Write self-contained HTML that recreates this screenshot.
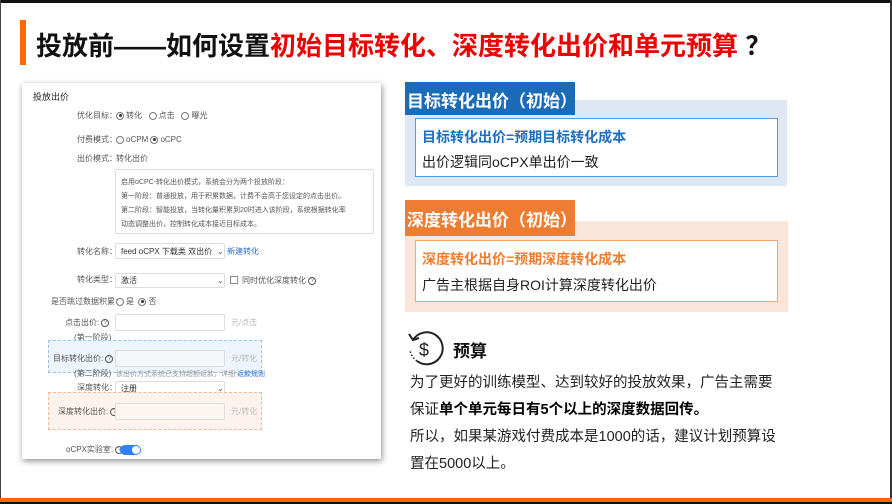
<!DOCTYPE html>
<html><head><meta charset="utf-8"><style>
*{margin:0;padding:0;box-sizing:border-box}
body{width:892px;height:504px;overflow:hidden;background:#fff;font-family:"Liberation Sans","Noto Sans CJK SC",sans-serif;position:relative}
.a{position:absolute;white-space:nowrap}
.s{font-size:8px;line-height:10px;color:#555}
.in{position:absolute;border:1px solid #ddd;background:#fff;border-radius:2px}
.r{display:inline-block;width:8px;height:8px;border:1px solid #777;border-radius:50%;vertical-align:middle;margin-right:2px;position:relative}
.r.on::after{content:"";position:absolute;left:1.5px;top:1.5px;width:3px;height:3px;border-radius:50%;background:#333}
.q{display:inline-block;width:8px;height:8px;border:1px solid #555;border-radius:50%;font-size:6px;line-height:6px;text-align:center;vertical-align:middle;overflow:hidden}
</style></head><body>
<div class="a" style="left:0;top:0;width:892px;height:3px;background:#111"></div>
<div class="a" style="left:0;top:0;width:1px;height:504px;background:#444"></div>
<div class="a" style="left:890px;top:0;width:2px;height:504px;background:#333"></div>
<div class="a" style="left:0;top:498px;width:892px;height:4px;background:#ff6600"></div>
<div class="a" style="left:0;top:502px;width:892px;height:2px;background:#111"></div>

<div class="a" style="left:20px;top:20px;width:6px;height:45px;background:#ff6a00"></div>
<div class="a" style="left:36px;top:26px;font-size:26px;font-weight:bold;color:#111;letter-spacing:0px">投放前——如何设置<span style="color:#ee0000">初始目标转化、深度转化出价和单元预算</span> ？</div>

<!-- screenshot panel -->
<div class="a" style="left:22px;top:83px;width:359px;height:376px;background:#fff;box-shadow:1px 2px 6px rgba(0,0,0,.45)"></div>
<div class="a" style="left:33px;top:90px;font-size:9px;color:#222">投放出价</div>
<div class="a s" style="left:77px;top:111px">优化目标：</div>
<div class="a s" style="left:116px;top:111px"><span class="r on"></span>转化 &nbsp;&nbsp;<span class="r"></span>点击 &nbsp;&nbsp;<span class="r"></span>曝光</div>
<div class="a s" style="left:77px;top:135px">付费模式：</div>
<div class="a s" style="left:116px;top:135px"><span class="r"></span>oCPM <span class="r on"></span>oCPC</div>
<div class="a s" style="left:77px;top:154px">出价模式：</div>
<div class="a s" style="left:116px;top:154px">转化出价</div>
<div class="in" style="left:115px;top:169px;width:259px;height:65px"></div>
<div class="a" style="left:121px;top:176px;font-size:7px;line-height:14px;color:#555">启用oCPC-转化出价模式，系统会分为两个投放阶段：<br>第一阶段：普通投放，用于积累数据，计费不会高于您设定的点击出价。<br>第二阶段：智能投放，当转化量积累到20时进入该阶段，系统根据转化率<br>动态调整出价，控制转化成本接近目标成本。</div>
<div class="a s" style="left:77px;top:247px">转化名称：</div>
<div class="in" style="left:115px;top:243px;width:110px;height:16px"></div>
<div class="a s" style="left:121px;top:247px;color:#333">feed oCPX 下载类 双出价</div>
<div class="a s" style="left:217px;top:247px">⌄</div>
<div class="a s" style="left:227px;top:247px;color:#2a6fd6">新建转化</div>
<div class="a s" style="left:77px;top:275px">转化类型：</div>
<div class="in" style="left:115px;top:273px;width:110px;height:15px"></div>
<div class="a s" style="left:121px;top:276px;color:#333">激活</div>
<div class="a s" style="left:217px;top:276px">⌄</div>
<div class="a" style="left:230px;top:276px;width:8px;height:8px;border:1px solid #888"></div>
<div class="a s" style="left:242px;top:276px">同时优化深度转化 <span class="q">?</span></div>
<div class="a s" style="left:51px;top:297px">是否跳过数据积累：</div>
<div class="a s" style="left:116px;top:297px"><span class="r"></span>是 &nbsp;<span class="r on"></span>否</div>
<div class="a s" style="left:65px;top:318px">点击出价: <span class="q">?</span></div>
<div class="in" style="left:115px;top:314px;width:110px;height:17px"></div>
<div class="a s" style="left:231px;top:318px;color:#bbb">元/点击</div>
<div class="a s" style="left:74px;top:333px">(第一阶段)</div>
<div class="a" style="left:48px;top:340px;width:214px;height:33px;background:#eef4fb;border:1px dashed #9cc3ec"></div>
<div class="a s" style="left:53px;top:354px">目标转化出价: <span class="q">?</span></div>
<div class="in" style="left:115px;top:350px;width:110px;height:17px;background:#f5f7fa"></div>
<div class="a s" style="left:231px;top:354px;color:#bbb">元/转化</div>
<div class="a s" style="left:74px;top:369px">(第二阶段)</div>
<div class="a" style="left:116px;top:369px;font-size:7px;color:#999">该出价方式系统已支持超额返款，详细 <span style="color:#2a6fd6">返款规则</span></div>
<div class="a s" style="left:77px;top:383px">深度转化：</div>
<div class="in" style="left:115px;top:381px;width:110px;height:15px"></div>
<div class="a s" style="left:121px;top:384px;color:#333">注册</div>
<div class="a s" style="left:217px;top:384px">⌄</div>
<div class="a" style="left:48px;top:392px;width:214px;height:38px;background:#fdf3ee;border:1px dashed #f5b99a"></div>
<div class="a s" style="left:58px;top:407px">深度转化出价: <span class="q">?</span></div>
<div class="in" style="left:115px;top:403px;width:110px;height:17px;background:#fdf5f1"></div>
<div class="a s" style="left:231px;top:407px;color:#bbb">元/转化</div>
<div class="a s" style="left:66px;top:445px">oCPX实验室: <span class="q">?</span></div>
<div class="a" style="left:120px;top:445px;width:21px;height:10px;border-radius:5px;background:#2d83f0"></div>
<div class="a" style="left:132px;top:446px;width:8px;height:8px;border-radius:50%;background:#fff"></div>

<!-- right blue block -->
<div class="a" style="left:405px;top:100px;width:382px;height:86px;background:#dde8f4"></div>
<div class="a" style="left:405px;top:82px;width:170px;height:33px;background:#1a6bb8"></div>
<div class="a" style="left:407px;top:87px;font-size:17px;font-weight:bold;color:#fff">目标转化出价（初始）</div>
<div class="a" style="left:415px;top:118px;width:363px;height:59px;background:#fff;border:1px solid #5b9bd5"></div>
<div class="a" style="left:422px;top:127px;font-size:14px;font-weight:bold;color:#1f6fc0">目标转化出价=预期目标转化成本</div>
<div class="a" style="left:422px;top:152px;font-size:14px;color:#222">出价逻辑同oCPX单出价一致</div>

<!-- right orange block -->
<div class="a" style="left:405px;top:221px;width:383px;height:91px;background:#fbe5d8"></div>
<div class="a" style="left:405px;top:200px;width:170px;height:36px;background:#ee7d31"></div>
<div class="a" style="left:407px;top:206px;font-size:17px;font-weight:bold;color:#fff">深度转化出价（初始）</div>
<div class="a" style="left:415px;top:240px;width:363px;height:62px;background:#fff;border:1px solid #f4a66e"></div>
<div class="a" style="left:422px;top:249px;font-size:14px;font-weight:bold;color:#ee7d31">深度转化出价=预期深度转化成本</div>
<div class="a" style="left:422px;top:275px;font-size:14px;color:#222">广告主根据自身ROI计算深度转化出价</div>

<!-- budget -->
<svg class="a" style="left:405px;top:328px" width="42" height="42" viewBox="0 0 42 42">
<path d="M8 12 A16 16 0 1 1 12 33" fill="none" stroke="#222" stroke-width="2"/>
<path d="M12 33 A16 16 0 0 1 5 22" fill="none" stroke="#222" stroke-width="1.5" stroke-dasharray="1.5 2"/>
<path d="M4 6 L8 12 L14 10" fill="none" stroke="#222" stroke-width="2"/>
<text x="14" y="28" font-size="18" font-family="Liberation Sans" fill="#222">$</text>
</svg>
<div class="a" style="left:453px;top:337px;font-size:17px;font-weight:bold;color:#111">预算</div>
<div class="a" style="left:410px;top:370px;font-size:14.5px;line-height:27px;color:#222">为了更好的训练模型、达到较好的投放效果，广告主需要<br>保证<b style="color:#000">单个单元每日有5个以上的深度数据回传。</b><br>所以，如果某游戏付费成本是1000的话，建议计划预算设<br>置在5000以上。</div>
</body></html>
